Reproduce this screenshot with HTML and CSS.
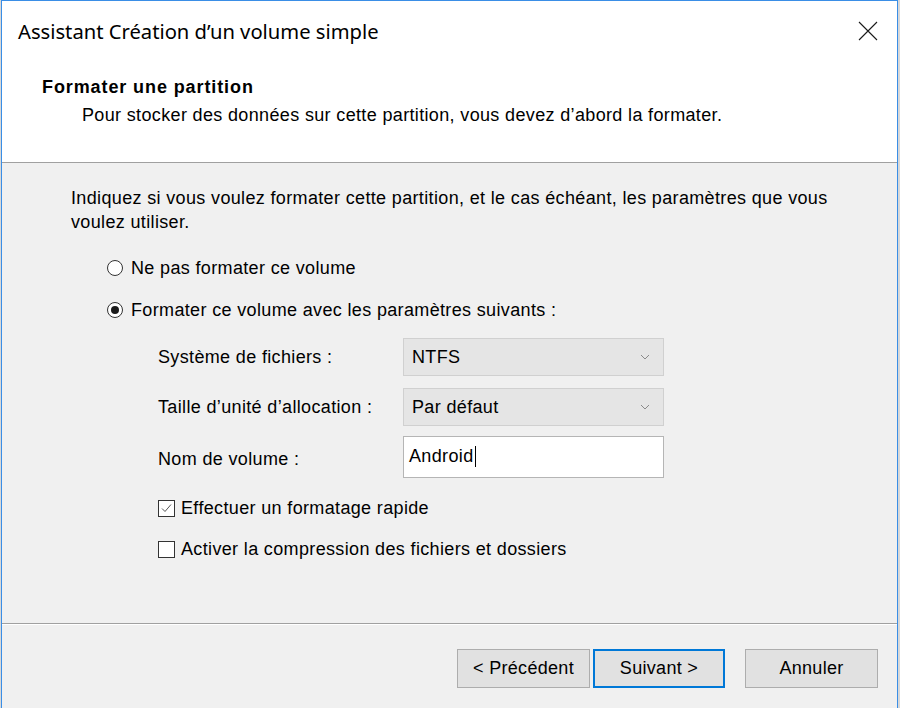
FILE: index.html
```html
<!DOCTYPE html>
<html lang="fr">
<head>
<meta charset="utf-8">
<title>Assistant Création d'un volume simple</title>
<link rel="stylesheet" href="styles.css">
</head>
<body>
<div class="window">
  <div class="titlebar">
    <span class="title">Assistant Création d’un volume simple</span>
    <svg class="close" width="20" height="20" viewBox="0 0 20 20"><path d="M1 1 L19 19 M19 1 L1 19" stroke="#1a1a1a" stroke-width="1.1" fill="none"/></svg>
  </div>
  <div class="header">
    <div class="h-title">Formater une partition</div>
    <div class="h-sub">Pour stocker des données sur cette partition, vous devez d’abord la formater.</div>
  </div>
  <div class="content">
    <p class="intro">Indiquez si vous voulez formater cette partition, et le cas échéant, les paramètres que vous voulez utiliser.</p>
    <div class="radio-row first"><span class="radio"></span><span>Ne pas formater ce volume</span></div>
    <div class="radio-row second"><span class="radio checked"></span><span>Formater ce volume avec les paramètres suivants :</span></div>
    <div class="form">
      <div class="label">Système de fichiers :</div>
      <div class="combo"><span>NTFS</span><svg width="10" height="6" viewBox="0 0 10 6"><path d="M1 1 L5 5 L9 1" stroke="#8a8a8a" stroke-width="1" fill="none"/></svg></div>
      <div class="label">Taille d’unité d’allocation :</div>
      <div class="combo"><span>Par défaut</span><svg width="10" height="6" viewBox="0 0 10 6"><path d="M1 1 L5 5 L9 1" stroke="#8a8a8a" stroke-width="1" fill="none"/></svg></div>
      <div class="label">Nom de volume :</div>
      <div class="textbox"><span>Android</span><span class="caret"></span></div>
    </div>
    <div class="check-row first"><span class="check checked"><svg width="13" height="13" viewBox="0 0 13 13"><path d="M2 6.5 L5 9.5 L11 2.5" stroke="#555" stroke-width="1" fill="none"/></svg></span><span>Effectuer un formatage rapide</span></div>
    <div class="check-row second"><span class="check"></span><span>Activer la compression des fichiers et dossiers</span></div>
  </div>
  <div class="footer">
    <button class="btn">&lt; Précédent</button>
    <button class="btn default">Suivant &gt;</button>
    <button class="btn cancel">Annuler</button>
  </div>
</div>
</body>
</html>
```
FILE: styles.css
```css
html, body {
  margin: 0;
  padding: 0;
}
body {
  width: 900px;
  height: 708px;
  overflow: hidden;
  background: #d8d8d8;
  font-family: "Liberation Sans", Arial, sans-serif;
  font-size: 18px;
  letter-spacing: 0.35px;
  color: #000;
}
.window {
  margin-left: 1px;
  width: 897px;
  height: 708px;
  overflow: hidden;
  box-sizing: border-box;
  border: 1px solid #3a8ee6;
  border-bottom: none;
  background: #f0f0f0;
  display: flex;
  flex-direction: column;
}
.titlebar {
  height: 61px;
  flex: none;
  background: #fff;
  display: flex;
  align-items: center;
  justify-content: space-between;
  padding: 0 19px 0 16px;
}
.title {
  font-family: "Noto Sans", "Segoe UI", sans-serif;
  font-size: 20.2px;
  letter-spacing: 0;
  color: #000;
  padding-bottom: 1px;
}
.close {
  display: block;
  margin-bottom: 1px;
}
.header {
  height: 101px;
  flex: none;
  box-sizing: border-box;
  background: #fff;
  border-bottom: 1px solid #a0a0a0;
  padding: 13px 0 0 40px;
}
.h-title {
  font-weight: bold;
  letter-spacing: 0.9px;
  line-height: 24px;
  height: 24px;
}
.h-sub {
  line-height: 24px;
  padding-left: 40px;
  margin-top: 4px;
}
.content {
  height: 460px;
  flex: none;
  padding: 23px 0 0 69px;
  box-sizing: border-box;
  display: flex;
  flex-direction: column;
}
.intro {
  margin: 0;
  line-height: 24px;
  width: 790px;
}
.radio-row {
  display: flex;
  align-items: center;
  height: 24px;
  margin-left: 36px;
  gap: 8px;
}
.radio-row.first { margin-top: 22px; }
.radio-row.second { margin-top: 18px; }
.radio {
  width: 14px;
  height: 14px;
  border: 1px solid #333;
  border-radius: 50%;
  background: #fff;
  position: relative;
  flex: none;
}
.radio.checked::after {
  content: "";
  position: absolute;
  left: 3px;
  top: 3px;
  width: 8px;
  height: 8px;
  border-radius: 50%;
  background: #1a1a1a;
}
.form {
  margin: 16px 0 0 87px;
  display: grid;
  grid-template-columns: 245px 261px;
  grid-template-rows: 38px 38px 42px;
  row-gap: 12px;
  align-items: center;
}
.combo {
  height: 38px;
  box-sizing: border-box;
  border: 1px solid #d0d0d0;
  background: #e5e5e5;
  display: flex;
  align-items: center;
  justify-content: space-between;
  padding: 0 13px 0 8px;
}
.combo svg { display: block; }
.textbox {
  height: 42px;
  box-sizing: border-box;
  border: 1px solid #b5b5b5;
  background: #fff;
  display: flex;
  align-items: center;
  padding-left: 5px;
  margin-top: -5px;
}
.caret {
  width: 1px;
  height: 21px;
  background: #000;
  margin-left: 1px;
}
.check-row {
  display: flex;
  align-items: center;
  height: 24px;
  margin-left: 87px;
  gap: 6px;
}
.check-row.first { margin-top: 16px; }
.check-row.second { margin-top: 17px; }
.check {
  width: 15px;
  height: 15px;
  border: 1px solid #333;
  background: #fff;
  flex: none;
  display: flex;
  align-items: center;
  justify-content: center;
}
.check svg { display: block; }
.footer {
  flex: 1;
  border-top: 1px solid #a0a0a0;
  box-shadow: inset 0 1px 0 #fff;
  display: flex;
  align-items: flex-start;
  padding: 25px 0 0 455px;
}
.btn {
  font-family: "Liberation Sans", Arial, sans-serif;
  font-size: 18px;
  letter-spacing: 0.3px;
  color: #000;
  background: #e1e1e1;
  border: 1px solid #adadad;
  height: 39px;
  width: 133px;
  padding: 0;
  margin: 0;
}
.btn.default {
  margin-left: 3px;
  width: 132px;
  border: 1px solid #0078d7;
  box-shadow: inset 0 0 0 1px #0078d7;
}
.btn.cancel {
  margin-left: 20px;
}
```
